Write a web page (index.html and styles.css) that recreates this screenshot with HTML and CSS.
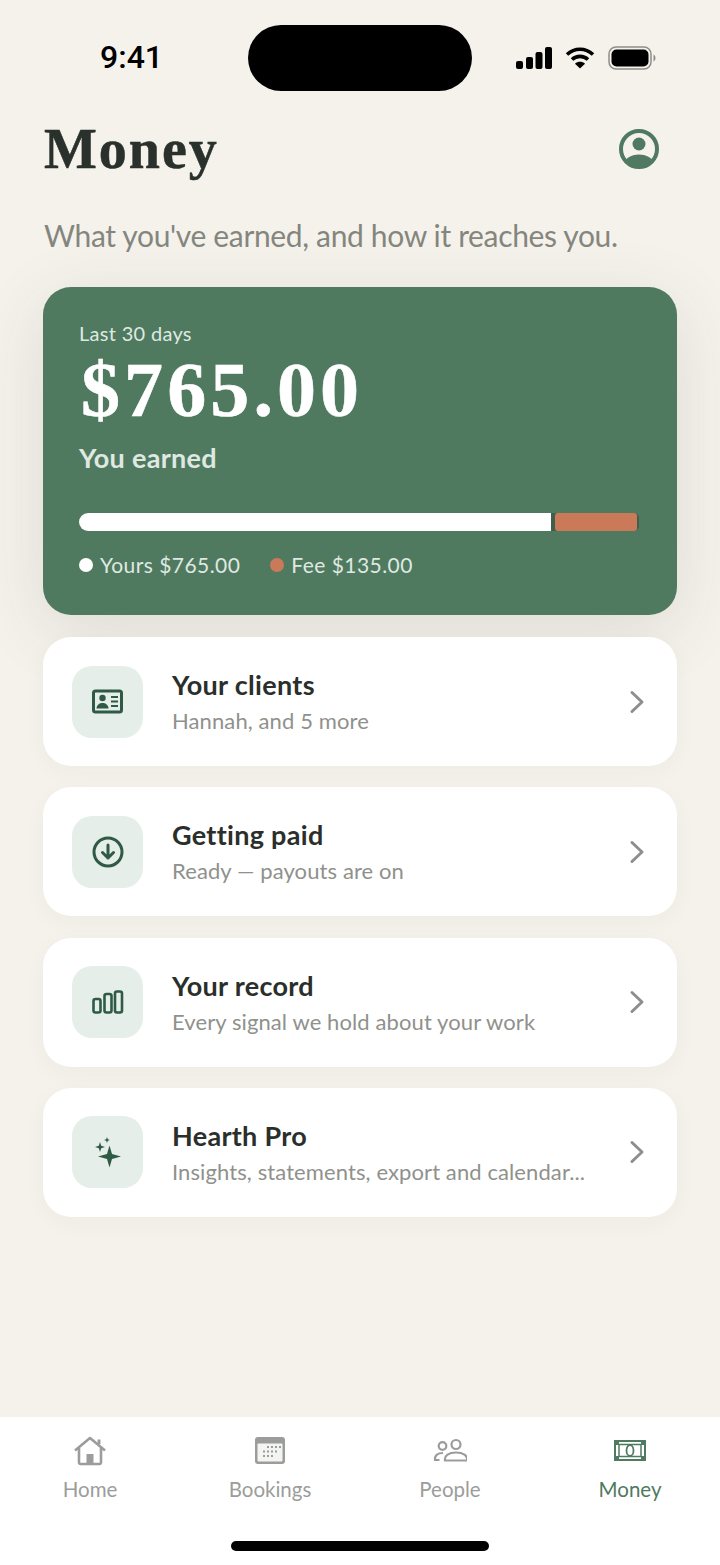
FILE: index.html
```html
<!DOCTYPE html>
<html lang="en">
<head>
    <meta charset="utf-8">
    <title>Money</title>
    <meta name="viewport" content="width=device-width, initial-scale=1">
    <link rel="stylesheet" href="styles.css">
</head>
<body>
    <div class="status-bar">
        <span class="status-time">9:41</span>
        <div class="island" aria-hidden="true"></div>
        <div class="status-icons" aria-hidden="true">
            <svg width="36" height="22" viewBox="0 0 36 22" fill="#000">
                <rect x="0" y="14" width="7" height="8" rx="2"/>
                <rect x="10" y="10" width="7" height="12" rx="2"/>
                <rect x="19.5" y="5" width="7" height="17" rx="2"/>
                <rect x="29" y="0" width="7" height="22" rx="2"/>
            </svg>
            <svg width="30" height="22" viewBox="0 0 30 22" fill="none" stroke="#000" stroke-width="3.6">
                <path d="M2 7.5C9.5 .5 20.5 .5 28 7.5"/>
                <path d="M7 12.5C11.5 8.3 18.5 8.3 23 12.5"/>
                <path d="M15 21.5L10 16.7C12.8 14.2 17.2 14.2 20 16.7Z" fill="#000" stroke="none"/>
            </svg>
            <svg width="48" height="24" viewBox="0 0 48 24">
                <rect x="1" y="1" width="42" height="22" rx="7" fill="none" stroke="#8f8d88" stroke-width="1.5"/>
                <rect x="3.5" y="3.5" width="37" height="17" rx="5" fill="#000"/>
                <path d="M45.5 8.5C47 9.5 47.5 10.5 47.5 12C47.5 13.5 47 14.5 45.5 15.5Z" fill="#8f8d88"/>
            </svg>
        </div>
    </div>

    <main class="content">
        <header class="page-header">
            <h1 class="page-title">Money</h1>
            <svg class="avatar" width="40" height="40" viewBox="0 0 40 40">
                <defs><clipPath id="avatarClip"><circle cx="20" cy="20" r="17"/></clipPath></defs>
                <circle cx="20" cy="20" r="18" fill="none" stroke="#4f7a61" stroke-width="4"/>
                <circle cx="20" cy="15" r="6.5" fill="#4f7a61"/>
                <ellipse cx="20" cy="36" rx="15" ry="10.5" fill="#4f7a61" clip-path="url(#avatarClip)"/>
            </svg>
        </header>
        <p class="page-sub">What you've earned, and how it reaches you.</p>

        <section class="earn-card">
            <p class="earn-period">Last 30 days</p>
            <p class="earn-amount">$765.00</p>
            <p class="earn-label">You earned</p>
            <div class="split-bar">
                <div class="split-yours"></div>
                <div class="split-fee"></div>
            </div>
            <div class="legend">
                <span class="legend-item"><i class="dot dot-white"></i>Yours $765.00</span>
                <span class="legend-item"><i class="dot dot-fee"></i>Fee $135.00</span>
            </div>
        </section>

        <section class="rows">
            <a class="row">
                <div class="row-icon">
                    <svg width="32" height="26" viewBox="0 0 32 26">
                        <rect x="1.5" y="2" width="28" height="21" rx="2" fill="none" stroke="#2f5a45" stroke-width="3"/>
                        <circle cx="10.5" cy="9" r="3.2" fill="#2f5a45"/>
                        <path d="M4.5 19.5c0-7.5 12-7.5 12 0z" fill="#2f5a45"/>
                        <path d="M19 8h7M19 12.5h7M19 17h7" stroke="#2f5a45" stroke-width="2"/>
                    </svg>
                </div>
                <div class="row-text">
                    <h2 class="row-title">Your clients</h2>
                    <p class="row-sub">Hannah, and 5 more</p>
                </div>
                <svg class="chevron" width="16" height="24" viewBox="0 0 16 24"><path d="M3 2.5L13 12L3 21.5"/></svg>
            </a>
            <a class="row">
                <div class="row-icon">
                    <svg width="32" height="32" viewBox="0 0 32 32" fill="none" stroke="#2f5a45" stroke-width="3" stroke-linecap="round" stroke-linejoin="round">
                        <circle cx="16" cy="16" r="14"/>
                        <path d="M16 9v13M10.5 16.5L16 22l5.5-5.5"/>
                    </svg>
                </div>
                <div class="row-text">
                    <h2 class="row-title">Getting paid</h2>
                    <p class="row-sub">Ready — payouts are on</p>
                </div>
                <svg class="chevron" width="16" height="24" viewBox="0 0 16 24"><path d="M3 2.5L13 12L3 21.5"/></svg>
            </a>
            <a class="row">
                <div class="row-icon">
                    <svg width="32" height="24" viewBox="0 0 32 24" fill="none" stroke="#2f5a45" stroke-width="2.6">
                        <rect x="1.5" y="9" width="7" height="13.5" rx="2"/>
                        <rect x="12.5" y="4" width="7" height="18.5" rx="2"/>
                        <rect x="23" y="1.5" width="7" height="21" rx="2"/>
                    </svg>
                </div>
                <div class="row-text">
                    <h2 class="row-title">Your record</h2>
                    <p class="row-sub">Every signal we hold about your work</p>
                </div>
                <svg class="chevron" width="16" height="24" viewBox="0 0 16 24"><path d="M3 2.5L13 12L3 21.5"/></svg>
            </a>
            <a class="row">
                <div class="row-icon">
                    <svg width="30" height="36" viewBox="0 0 30 36" fill="#2f5a45">
                        <path d="M16.5 11.5L19 20L28 22.5L19 25L16.5 33.5L14 25L5 22.5L14 20Z"/>
                        <path d="M7 8L8.2 11.8L12 13L8.2 14.2L7 18L5.8 14.2L2 13L5.8 11.8Z"/>
                        <path d="M14 3L14.8 5.2L17 6L14.8 6.8L14 9L13.2 6.8L11 6L13.2 5.2Z"/>
                    </svg>
                </div>
                <div class="row-text">
                    <h2 class="row-title">Hearth Pro</h2>
                    <p class="row-sub">Insights, statements, export and calendar...</p>
                </div>
                <svg class="chevron" width="16" height="24" viewBox="0 0 16 24"><path d="M3 2.5L13 12L3 21.5"/></svg>
            </a>
        </section>
    </main>

    <nav class="tabbar">
        <div class="tabs">
            <a class="tab">
                <svg width="34" height="30" viewBox="0 0 34 30" fill="none" stroke="#9b9d9b" stroke-width="2.6" stroke-linejoin="round">
                    <path d="M2 14.5L17 2L32 14.5"/>
                    <path d="M6 12v14.5a1.5 1.5 0 0 0 1.5 1.5h19a1.5 1.5 0 0 0 1.5-1.5V12"/>
                    <path d="M26 8V3.5" stroke-width="3"/>
                    <rect x="13.5" y="18" width="7" height="10" fill="#9b9d9b" stroke="none"/>
                </svg>
                <span>Home</span>
            </a>
            <a class="tab">
                <svg width="30" height="30" viewBox="0 0 30 30">
                    <rect x="0" y="1" width="30" height="27" rx="3" fill="#9b9d9b"/>
                    <rect x="2.5" y="7.5" width="25" height="18" rx="1" fill="#f4f4f3"/>
                    <g fill="#9b9d9b">
                        <rect x="12" y="10" width="2" height="2"/><rect x="16" y="10" width="2" height="2"/><rect x="20" y="10" width="2" height="2"/><rect x="24" y="10" width="2" height="2"/>
                        <rect x="8" y="14.5" width="2" height="2"/><rect x="12" y="14.5" width="2" height="2"/><rect x="16" y="14.5" width="2" height="2"/><rect x="20" y="14.5" width="2" height="2"/>
                        <rect x="8" y="19" width="2" height="2"/><rect x="12" y="19" width="2" height="2"/><rect x="16" y="19" width="2" height="2"/>
                    </g>
                </svg>
                <span>Bookings</span>
            </a>
            <a class="tab">
                <svg width="34" height="30" viewBox="0 0 34 30" fill="none" stroke="#9b9d9b" stroke-width="2.2">
                    <circle cx="9.5" cy="10" r="3.8"/>
                    <circle cx="23" cy="8.5" r="4.5"/>
                    <path d="M6.5 24H2C1.5 19 5 17 10 17"/>
                    <path d="M12 24.5c-1-5 4-8 11-8s12 3 11 8z"/>
                </svg>
                <span>People</span>
            </a>
            <a class="tab tab-active">
                <svg width="32" height="30" viewBox="0 0 32 30" fill="none" stroke="#4f7a61">
                    <rect x="1" y="5" width="30" height="19" stroke-width="2"/>
                    <rect x="5" y="8.5" width="22" height="12" stroke-width="1.5"/>
                    <ellipse cx="16" cy="14.5" rx="3.5" ry="5.5" stroke-width="1.8"/>
                    <path d="M2 6h3v3H2zM27 6h3v3h-3zM2 20h3v3H2zM27 20h3v3h-3z" fill="#4f7a61" stroke="none"/>
                </svg>
                <span>Money</span>
            </a>
        </div>
        <div class="home-indicator"></div>
    </nav>
</body>
</html>
```

FILE: styles.css
```css
* {
    box-sizing: border-box;
}
html, body {
    margin: 0;
    padding: 0;
}
body {
    width: 720px;
    min-height: 1565px;
    display: flex;
    flex-direction: column;
    background: #f5f2ec;
    color: #2b2f2b;
    font-family: Lato, 'Noto Sans', sans-serif;
}
p, h1, h2 {
    margin: 0;
}
.status-bar {
    height: 91px;
    padding: 25px 64px 0 100px;
    display: flex;
    align-items: flex-start;
}
.status-time {
    width: 148px;
    margin-top: 15px;
    font-family: Roboto, 'Liberation Sans', sans-serif;
    font-size: 32px;
    line-height: 34px;
    font-weight: 500;
    color: #000;
}
.island {
    width: 224px;
    height: 66px;
    background: #000;
    border-radius: 33px;
}
.status-icons {
    margin-left: 44px;
    margin-top: 21px;
    display: flex;
    align-items: center;
    gap: 13px;
}
.content {
    flex: 1;
    padding: 0 43px;
}
.page-header {
    margin-top: 24px;
    padding-right: 18px;
    display: flex;
    align-items: center;
    justify-content: space-between;
}
.page-title {
    padding-left: 1px;
    font-family: 'Liberation Serif', serif;
    font-size: 56px;
    line-height: 68px;
    font-weight: 700;
    letter-spacing: 2px;
    color: #2a312c;
    -webkit-text-stroke: 0.5px #2a312c;
}
.page-sub {
    margin-top: 32px;
    font-size: 30px;
    line-height: 40px;
    font-weight: 400;
    letter-spacing: -0.35px;
    color: #84867e;
    padding-left: 1px;
}
.earn-card {
    margin-top: 32px;
    height: 328px;
    padding: 34px 36px;
    background: #507a5f;
    border-radius: 28px;
    color: #fff;
    box-shadow: 0 16px 70px rgba(60, 50, 30, 0.12);
}
.earn-period {
    margin-top: -1px;
    font-size: 20px;
    line-height: 26px;
    letter-spacing: 0.3px;
    color: #dfe9e2;
}
.earn-amount {
    margin-top: 8px;
    padding-left: 2px;
    font-family: 'Liberation Serif', serif;
    font-size: 78px;
    line-height: 72px;
    font-weight: 700;
    letter-spacing: 4.1px;
    -webkit-text-stroke: 0.6px #fff;
}
.earn-label {
    margin-top: 15px;
    font-size: 27px;
    line-height: 34px;
    font-weight: 700;
    letter-spacing: 0.3px;
    color: #dfe9e2;
}
.split-bar {
    margin-top: 38px;
    width: 560px;
    height: 18px;
    display: flex;
    gap: 4px;
    padding-right: 2px;
    background: #3f5f4c;
    border-radius: 9px 5px 5px 9px;
}
.split-yours {
    width: 472px;
    background: #fff;
    border-radius: 9px 0 0 9px;
}
.split-fee {
    flex: 1;
    background: #cb7a59;
    border-radius: 3px;
}
.legend {
    margin-top: 19px;
    display: flex;
    gap: 30px;
    font-size: 21px;
    line-height: 30px;
    letter-spacing: 0.45px;
    color: #dfe9e2;
}
.legend-item {
    display: flex;
    align-items: center;
    gap: 7px;
}
.dot {
    width: 14px;
    height: 14px;
    border-radius: 50%;
}
.dot-white {
    background: #fff;
}
.dot-fee {
    background: #cb7a59;
}
.rows {
    margin-top: 22px;
    display: flex;
    flex-direction: column;
    gap: 21.3px;
}
.row {
    height: 129px;
    padding: 0 32px 0 29px;
    display: flex;
    align-items: center;
    background: #fff;
    border-radius: 28px;
    box-shadow: 0 6px 24px rgba(60, 40, 30, 0.035);
}
.row-icon {
    width: 71px;
    height: 72px;
    flex: none;
    display: flex;
    align-items: center;
    justify-content: center;
    background: #e5eee8;
    border-radius: 20px;
}
.row-text {
    flex: 1;
    margin-left: 29px;
}
.row-title {
    font-size: 27px;
    line-height: 34px;
    font-weight: 700;
    letter-spacing: 0.3px;
    color: #2b2f2b;
}
.row-sub {
    margin-top: 5px;
    font-size: 22px;
    line-height: 28px;
    letter-spacing: 0.1px;
    color: #8f918c;
}
.chevron {
    flex: none;
    fill: none;
    stroke: #8d8f8c;
    stroke-width: 3;
    stroke-linecap: round;
    stroke-linejoin: round;
}
.tabbar {
    height: 148px;
    background: #fff;
    display: flex;
    flex-direction: column;
    align-items: center;
}
.tabs {
    width: 100%;
    padding-top: 19px;
    display: grid;
    grid-template-columns: repeat(4, 1fr);
}
.tab {
    display: flex;
    flex-direction: column;
    align-items: center;
    gap: 9px;
    font-size: 20.5px;
    line-height: 28px;
    color: #9b9d9b;
}
.tab-active {
    color: #4f7a61;
}
.home-indicator {
    margin-top: 38px;
    width: 258px;
    height: 10px;
    background: #000;
    border-radius: 5px;
}
```
